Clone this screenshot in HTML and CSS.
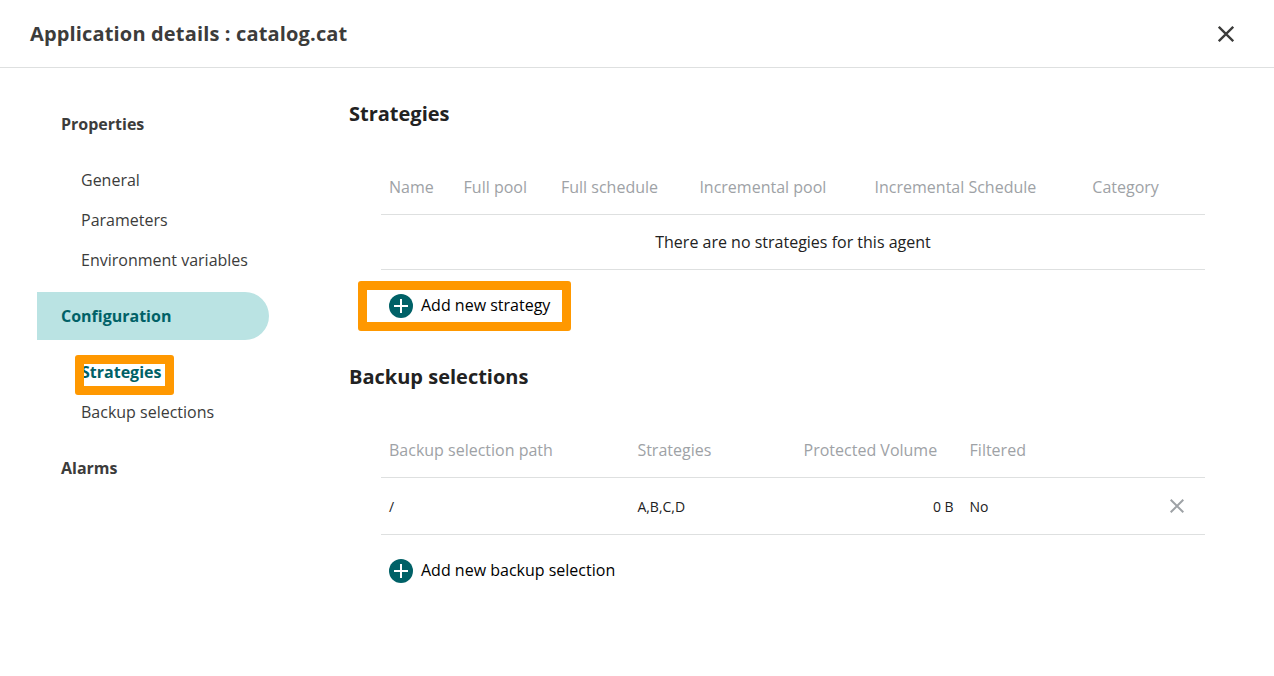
FILE: index.html
```html
<!DOCTYPE html>
<html lang="en">
<head>
<meta charset="utf-8">
<title>Application details</title>
<link rel="stylesheet" href="styles.css">
</head>
<body>
<header class="header">
  <h1 class="title">Application details : catalog.cat</h1>
  <button class="close" aria-label="Close"><svg width="16" height="16" viewBox="0 0 16 16"><path d="M.8.8l14.4 14.4M15.2.8L.8 15.2" stroke="#3c3c3b" stroke-width="2.3"/></svg></button>
</header>
<div class="layout">
  <nav class="nav">
    <a class="group">Properties</a>
    <a class="item">General</a>
    <a class="item">Parameters</a>
    <a class="item">Environment variables</a>
    <a class="group active">Configuration</a>
    <a class="item current">Strategies<span class="mark mark-nav"></span></a>
    <a class="item">Backup selections</a>
    <a class="group">Alarms</a>
  </nav>
  <main class="main">
    <section class="section">
      <h2 class="heading">Strategies</h2>
      <div class="table">
        <div class="row head strategies-head">
          <span>Name</span><span>Full pool</span><span>Full schedule</span><span>Incremental pool</span><span>Incremental Schedule</span><span>Category</span>
        </div>
        <div class="row empty">There are no strategies for this agent</div>
      </div>
      <button class="add"><svg width="24" height="24" viewBox="0 0 24 24"><circle cx="12" cy="12" r="12" fill="#006167"/><path d="M12 5v14M5 12h14" stroke="#fff" stroke-width="2"/></svg><span class="label">Add new strategy</span><span class="mark mark-add"></span></button>
    </section>
    <section class="section">
      <h2 class="heading">Backup selections</h2>
      <div class="table">
        <div class="row head backup-row">
          <span>Backup selection path</span><span>Strategies</span><span>Protected Volume</span><span>Filtered</span>
        </div>
        <div class="row backup-row data">
          <span>/</span><span>A,B,C,D</span><span class="value">0 B</span><span>No</span>
          <svg class="remove" width="14" height="14" viewBox="0 0 14 14"><path d="M.7.7l12.6 12.6M13.3.7L.7 13.3" stroke="#9ea2a6" stroke-width="2"/></svg>
        </div>
      </div>
      <button class="add"><svg width="24" height="24" viewBox="0 0 24 24"><circle cx="12" cy="12" r="12" fill="#006167"/><path d="M12 5v14M5 12h14" stroke="#fff" stroke-width="2"/></svg><span class="label">Add new backup selection</span></button>
    </section>
  </main>
</div>
</body>
</html>
```
FILE: styles.css
```css
* { box-sizing: border-box; }
body { margin: 0; height: 676px; overflow: hidden; background: #fff; color: #222; font: 16px/24px "Open Sans", sans-serif; }
button { border: 0; padding: 0; background: none; font: inherit; color: #000; }
.header { height: 68px; padding: 0 40px 0 30px; display: flex; align-items: center; justify-content: space-between; border-bottom: 1px solid #dee0e0; }
.title { margin: 0; font-size: 20px; line-height: 28px; font-weight: 700; letter-spacing: .155px; color: #3c3c3b; }
.close { display: flex; }
.layout { display: flex; }
.nav { width: 349px; padding: 32px 80px 0 37px; color: #3c3c3b; }
.group { display: block; height: 48px; padding-left: 24px; line-height: 48px; font-weight: 700; }
.group + .item { margin-top: 12px; }
.item { display: block; position: relative; height: 40px; padding-left: 44px; line-height: 40px; white-space: nowrap; }
.item + .group { margin-top: 12px; }
.active { background: #bae3e3; color: #006167; border-radius: 0 24px 24px 0; }
.current { color: #006167; font-weight: 700; }
.mark { position: absolute; border: 9px solid #ff9800; border-radius: 3px; }
.mark-nav { left: 38px; top: 3px; width: 99px; height: 40px; }
.main { width: 856px; padding-top: 32px; }
.section { height: 263px; }
.heading { margin: 0; font-size: 20px; line-height: 28px; font-weight: 700; }
.table { margin: 32px 0 0 32px; }
.row { border-bottom: 1px solid #dee0e0; }
.head { height: 55px; line-height: 54px; color: #9ea2a6; white-space: nowrap; }
.strategies-head { display: grid; grid-template-columns: 74.6px 97.4px 138.4px 175.2px 217.8px 1fr; padding-left: 8px; }
.empty { height: 55px; line-height: 54px; text-align: center; }
.add { position: relative; display: flex; align-items: center; gap: 8px; height: 24px; margin: 24px 0 0 40px; }
.label { padding-bottom: 2px; }
.mark-add { left: -31px; top: -13px; width: 213px; height: 50px; }
.backup-row { display: grid; grid-template-columns: 248.4px 166.2px 166px 182px 1fr; align-items: center; padding-left: 8px; }
.value { text-align: right; padding-right: 16px; }
.data { height: 57px; font-size: 14px; }
.data span { padding-top: 2px; }
.remove { margin-left: 18.4px; }
```
